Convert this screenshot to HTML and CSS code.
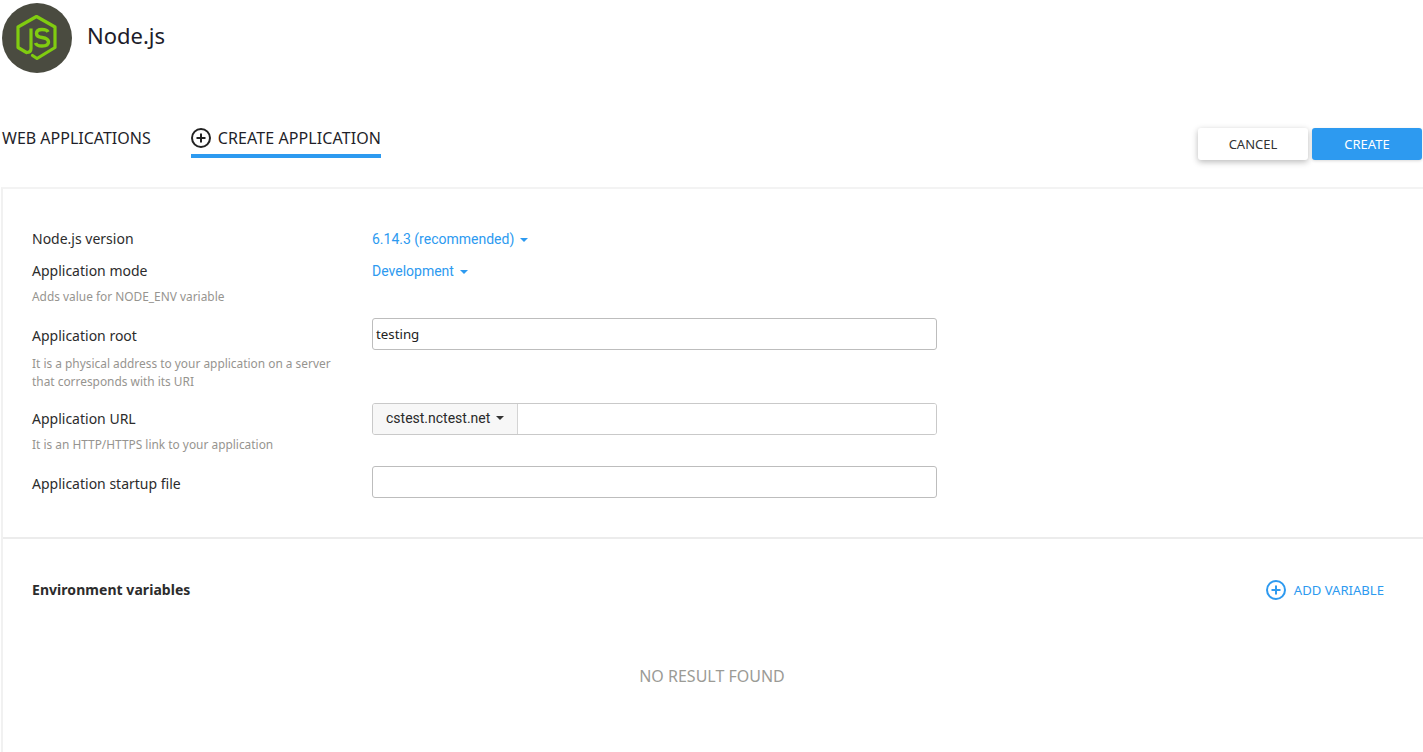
FILE: index.html
```html
<!DOCTYPE html>
<html lang="en">
<head>
<meta charset="utf-8">
<title>Node.js</title>
<link rel="stylesheet" href="styles.css">
</head>
<body>
<header class="app-header">
  <span class="logo">
    <svg width="70" height="70" viewBox="0 0 70 70">
      <circle cx="35" cy="35" r="35" fill="#4a4b40"/>
      <path d="M24.500 49.500 L16 44.500 V24 L34.500 13.500 L53 24 V44.500 L35 55.500 L30.500 52.500" fill="none" stroke="#80cc10" stroke-width="3.200" stroke-linejoin="round" stroke-linecap="round"/>
      <path d="M29 25.500 V45.500 Q29 49.500 24.500 49.500" fill="none" stroke="#80cc10" stroke-width="3.200"/>
      <path d="M46 29 Q45 26.500 40 26.500 Q34.500 26.500 34.500 30.500 Q34.500 34 40 34.500 Q46.500 35.500 46.500 39 Q46.500 43 40 43 Q34.500 43 33.500 40" fill="none" stroke="#80cc10" stroke-width="3.400"/>
    </svg>
  </span>
  <h1 class="app-title">Node.js</h1>
</header>
<div class="toolbar">
  <nav class="tabs">
    <a class="tab">WEB APPLICATIONS</a>
    <a class="tab tab-active">
      <svg class="plus" width="20" height="20" viewBox="0 0 20 20"><circle cx="10" cy="10" r="9" fill="none" stroke="#222" stroke-width="2"/><path d="M10 5.500v9M5.500 10h9" stroke="#222" stroke-width="2"/></svg>
      CREATE APPLICATION
    </a>
  </nav>
  <div class="actions">
    <button class="btn btn-cancel">CANCEL</button>
    <button class="btn btn-create">CREATE</button>
  </div>
</div>
<main class="panel">
  <section class="form">
    <div class="row row-version">
      <div class="label-col"><div class="label">Node.js version</div></div>
      <div class="field-col"><span class="dropdown">6.14.3 (recommended)<i class="caret"></i></span></div>
    </div>
    <div class="row row-mode">
      <div class="label-col">
        <div class="label">Application mode</div>
        <div class="hint">Adds value for NODE_ENV variable</div>
      </div>
      <div class="field-col"><span class="dropdown">Development<i class="caret"></i></span></div>
    </div>
    <div class="row row-root">
      <div class="label-col">
        <div class="label">Application root</div>
        <div class="hint">It is a physical address to your application on a server<br>that corresponds with its URI</div>
      </div>
      <div class="field-col"><input class="input" type="text" value="testing"></div>
    </div>
    <div class="row row-url">
      <div class="label-col">
        <div class="label">Application URL</div>
        <div class="hint">It is an HTTP/HTTPS link to your application</div>
      </div>
      <div class="field-col">
        <div class="input-group">
          <span class="addon">cstest.nctest.net<i class="caret caret-dark"></i></span>
          <input class="input-bare" type="text">
        </div>
      </div>
    </div>
    <div class="row row-file">
      <div class="label-col"><div class="label">Application startup file</div></div>
      <div class="field-col"><input class="input" type="text"></div>
    </div>
  </section>
  <section class="env">
    <div class="env-head">
      <h2 class="env-title">Environment variables</h2>
      <a class="add-var">
        <svg width="20" height="20" viewBox="0 0 20 20"><circle cx="10" cy="10" r="9" fill="none" stroke="#2d9af0" stroke-width="2"/><path d="M10 5.500v9M5.500 10h9" stroke="#2d9af0" stroke-width="2"/></svg>
        ADD VARIABLE
      </a>
    </div>
    <p class="empty">NO RESULT FOUND</p>
  </section>
</main>
</body>
</html>
```
FILE: styles.css
```css
* { box-sizing: border-box; }
html, body { margin: 0; padding: 0; height: 100%; overflow: hidden; }
body {
  background: #fff;
  color: #222;
  font-family: "Noto Sans", "Open Sans", sans-serif;
  font-size: 14px;
}
.app-header {
  display: flex;
  align-items: flex-start;
  gap: 15px;
  padding: 3px 0 0 2px;
  height: 118px;
}
.logo { display: block; width: 70px; height: 70px; }
.logo svg { display: block; }
.app-title {
  margin: 0;
  padding-top: 16px;
  font-size: 22px;
  line-height: 33px;
  font-weight: 400;
  color: #1c1c2a;
}
.toolbar {
  display: flex;
  justify-content: space-between;
  align-items: flex-start;
  height: 69px;
  padding: 10px 1px 0 2px;
}
.tabs { display: flex; gap: 40px; }
.tab {
  display: flex;
  align-items: flex-start;
  gap: 7px;
  height: 30px;
  font-size: 16px;
  line-height: 20px;
  color: #1f1f2a;
  white-space: nowrap;
}
.tab-active {
  border-bottom: 4px solid #2d9af0;
  letter-spacing: 0.1px;
}
.plus { display: block; }
.actions { display: flex; gap: 4px; }
.btn {
  width: 110px;
  height: 32px;
  border: 0;
  border-radius: 3px;
  font-family: inherit;
  font-size: 13px;
  padding: 0;
}
.btn-cancel { background: #fff; color: #333; box-shadow: 0 2px 6px rgba(0,0,0,.28); }
.btn-create { background: #2d9af0; color: #fff; box-shadow: 0 1px 3px rgba(0,0,0,.15); }
.panel {
  margin-left: 1px;
  height: 565px;
  border-left: 2px solid #f1f1f1;
  border-top: 2px solid #f3f3f3;
}
.form {
  padding: 37px 30px 39px 29px;
  border-bottom: 2px solid #ececec;
}
.row { display: flex; }
.label-col { width: 340px; flex: none; }
.field-col { width: 565px; flex: none; }
.label { font-size: 14px; line-height: 20px; color: #2c2c2c; }
.hint { font-size: 11.900px; line-height: 18px; color: #96948f; }
.row-version { height: 32px; padding-top: 3px; }
.row-mode { height: 60px; padding-top: 3px; }
.row-mode .hint { margin-top: 6px; }
.row-root { height: 85px; }
.row-root .label { padding-top: 8px; }
.row-root .hint { margin-top: 8px; }
.row-url { height: 63px; }
.row-url .label { padding-top: 6px; }
.row-url .hint { margin-top: 6px; }
.row-file { height: 32px; }
.row-file .label { padding-top: 8px; }
.dropdown {
  display: inline-flex;
  align-items: center;
  font-family: Roboto, sans-serif;
  color: #2d9af0;
  line-height: 20px;
}
.caret {
  display: inline-block;
  width: 0;
  height: 0;
  margin-left: 6px;
  margin-top: 1px;
  border-left: 4px solid transparent;
  border-right: 4px solid transparent;
  border-top: 4px solid #2d9af0;
}
.caret-dark { border-top-color: #333; }
.input {
  display: block;
  width: 565px;
  height: 32px;
  border: 1px solid #bdbdbd;
  border-radius: 3px;
  padding: 1px 3px 1px;
  font-family: inherit;
  font-size: 13.300px;
  color: #222;
  background: #fff;
  outline: 0;
}
.input-group {
  display: flex;
  width: 565px;
  height: 32px;
  border: 1px solid #c9c9c9;
  border-radius: 3px;
  overflow: hidden;
}
.addon {
  display: flex;
  align-items: center;
  padding: 0 13px 3px 13px;
  background: #f7f7f7;
  border-right: 1px solid #d4d4d4;
  font-family: Roboto, sans-serif;
  color: #2a2a2a;
  white-space: nowrap;
}
.input-bare { flex: 1; min-width: 0; border: 0; outline: 0; background: #fff; }
.env { padding: 0 39px 0 29px; }
.env-head {
  display: flex;
  justify-content: space-between;
  align-items: center;
  padding-top: 36px;
  height: 66px;
}
.env-title { margin: 0; font-size: 14px; line-height: 20px; font-weight: 700; color: #2c2c2c; letter-spacing: 0.05px; }
.add-var {
  display: flex;
  align-items: center;
  gap: 8px;
  font-size: 13.100px;
  line-height: 20px;
  color: #2d9af0;
}
.empty {
  margin: 60px 0 0;
  padding-left: 8px;
  text-align: center;
  font-size: 16px;
  line-height: 22px;
  color: #9b9b96;
}
```
